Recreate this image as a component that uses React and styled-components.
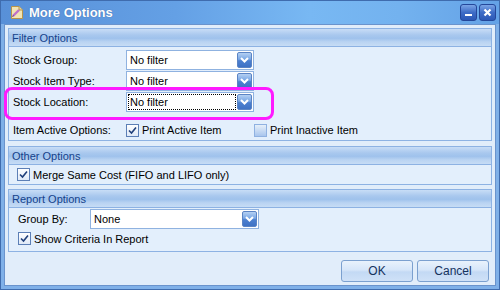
import React from 'react'
import styled, { createGlobalStyle } from 'styled-components'

const Global = createGlobalStyle`
	html, body {
		margin: 0;
		padding: 0;
		background: #fff;
	}
	body {
		font-family: "Liberation Sans", Arial, sans-serif;
		font-size: 11px;
		color: #000;
	}
`

const Window = styled.div`
	box-sizing: border-box;
	position: relative;
	width: 500px;
	height: 290px;
	display: flex;
	flex-direction: column;
	border: 1px solid #3f6cae;
	background: #7fb0e8;
`

const TitleBar = styled.div`
	height: 23px;
	display: flex;
	align-items: center;
	gap: 5px;
	padding: 0 3px 0 9px;
	background: linear-gradient(to right, #5890d8 0%, #64a0e5 35%, #78b8f3 62%, #73b2ef 80%, #64a2e6 100%);
`

const Title = styled.div`
	flex: 1;
	color: #fff;
	font-weight: bold;
	font-size: 13px;
	text-shadow: 0 0 1px rgba(30, 60, 120, 0.6);
`

const Caps = styled.div`
	display: flex;
	gap: 2px;
`

const CapButton = styled.div`
	box-sizing: border-box;
	width: 17px;
	height: 17px;
	border: 1px solid #24479a;
	border-radius: 3px;
	background: linear-gradient(#7aa4e6 0%, #3e6cc6 50%, #2c58b6 100%);
	display: flex;
	align-items: center;
	justify-content: center;
`

const Body = styled.div`
	flex: 1;
	margin: 0 3px 3px;
	border: 1px solid #6a93cc;
	background: #e1edfa;
	padding: 3px;
	display: flex;
	flex-direction: column;
`

const Panel = styled.div`
	border: 1px solid #8db2e3;
	background: #e3effc;
	margin-bottom: ${p => p.$gap || 0}px;
`

const PanelHeader = styled.div`
	height: 17px;
	display: flex;
	align-items: center;
	padding-left: 3px;
	border-bottom: 1px solid #8db2e3;
	color: #15428b;
	background: linear-gradient(#c8ddf6 0%, #a9c8ee 35%, #9fc2ec 55%, #b9d3f2 75%, #c6dcf5 100%);
`

const FilterGrid = styled.div`
	display: grid;
	grid-template-columns: 113px 1fr;
	grid-template-rows: 20px 20px 20px;
	row-gap: 1px;
	align-items: center;
	padding: 3px 0 2px 4px;
`

const Label = styled.div`
	white-space: nowrap;
`

const CheckRow = styled.div`
	grid-column: 1 / -1;
	display: grid;
	grid-template-columns: 113px 128px 1fr;
	align-items: center;
	height: 16px;
	margin-top: 9px;
`

const OtherBody = styled.div`
	padding: 3px 8px 3px;
`

const ReportGrid = styled.div`
	display: grid;
	grid-template-columns: 72px 1fr;
	align-items: center;
	row-gap: 3px;
	padding: 1px 0 6px 9px;
`

const Select = styled.div`
	box-sizing: border-box;
	width: ${p => p.$w}px;
	height: 20px;
	border: 1px solid #8fb2e0;
	background: #fff;
	display: flex;
	align-items: center;
	padding: 1px;
`

const SelectText = styled.span`
	flex: 1;
	align-self: stretch;
	display: flex;
	align-items: center;
	padding-left: 2px;
	margin-right: 1px;
	outline: ${p => (p.$focus ? '1px dotted #000' : 'none')};
	outline-offset: -1px;
`

const SelectButton = styled.span`
	box-sizing: border-box;
	width: 15px;
	height: 16px;
	border: 1px solid #5b84c4;
	border-radius: 2px;
	background: linear-gradient(#b4d0f3 0%, #78a6e4 45%, #4c80d0 55%, #3f72c4 100%);
	display: flex;
	align-items: center;
	justify-content: center;
`

const Check = styled.label`
	display: flex;
	align-items: center;
	gap: 3px;
	white-space: nowrap;
	grid-column: ${p => p.$span ? '1 / -1' : 'auto'};
`

const Box = styled.span`
	box-sizing: border-box;
	width: 13px;
	height: 13px;
	border: 1px solid ${p => (p.$checked ? '#5c7fb6' : '#8fb1e1')};
	background: ${p => (p.$checked
		? 'linear-gradient(#ffffff, #dfe9f7)'
		: 'linear-gradient(#e6eff9, #a8c5ed)')};
	display: flex;
	align-items: center;
	justify-content: center;
`

const Footer = styled.div`
	margin-top: auto;
	display: flex;
	justify-content: flex-end;
	gap: 4px;
	padding-right: 3px;
`

const Button = styled.div`
	box-sizing: border-box;
	width: 72px;
	height: 22px;
	border: 1px solid #7ba0cf;
	border-radius: 3px;
	background: linear-gradient(#e9f2fc 0%, #d6e6f9 45%, #c3d9f4 55%, #cfe1f7 100%);
	color: #15325e;
	font-size: 12px;
	display: flex;
	align-items: center;
	justify-content: center;
`

const Highlight = styled.div`
	position: absolute;
	left: 3px;
	top: 86px;
	width: 270px;
	height: 33px;
	box-sizing: border-box;
	border: 3px solid #ff1aff;
	border-radius: 8px;
	pointer-events: none;
`

const Chevron = () => (
	<svg width="9" height="6" viewBox="0 0 9 6">
		<path d="M1 1 L4.5 4.5 L8 1" fill="none" stroke="#fff" strokeWidth="2" />
	</svg>
)

const Tick = () => (
	<svg width="9" height="9" viewBox="0 0 9 9">
		<path d="M1 4.5 L3.5 7 L8 1.5" fill="none" stroke="#1f3f7a" strokeWidth="1.6" />
	</svg>
)

const Dropdown = ({ w, value, focus }) => (
	<Select $w={w}>
		<SelectText $focus={focus}>{value}</SelectText>
		<SelectButton><Chevron /></SelectButton>
	</Select>
)

const CheckBox = ({ checked, children, span }) => (
	<Check $span={span}>
		<Box $checked={checked}>{checked && <Tick />}</Box>
		{children}
	</Check>
)

const AppIcon = () => (
	<svg width="14" height="15" viewBox="0 0 14 15">
		<path d="M1.5 1.5 H9 L12.5 5 V13.5 H1.5 Z" fill="#f3e4b4" stroke="#b8954a" />
		<path d="M9 1.5 V5 H12.5" fill="#e8d49a" stroke="#b8954a" />
		<path d="M3 11 L9 5" stroke="#c070c8" strokeWidth="2.4" />
		<path d="M2.5 12 L3.5 10.2" stroke="#6a4b8a" strokeWidth="1" />
	</svg>
)

export default function App() {
	return (
		<>
			<Global />
			<Window>
				<TitleBar>
					<AppIcon />
					<Title>More Options</Title>
					<Caps>
						<CapButton>
							<svg width="9" height="9" viewBox="0 0 9 9">
								<rect x="1" y="6" width="7" height="2" fill="#fff" />
							</svg>
						</CapButton>
						<CapButton>
							<svg width="9" height="9" viewBox="0 0 9 9">
								<path d="M1.5 1.5 L7.5 7.5 M7.5 1.5 L1.5 7.5" stroke="#fff" strokeWidth="2.2" />
							</svg>
						</CapButton>
					</Caps>
				</TitleBar>
				<Body>
					<Panel $gap={5}>
						<PanelHeader>Filter Options</PanelHeader>
						<FilterGrid>
							<Label>Stock Group:</Label>
							<Dropdown w={128} value="No filter" />
							<Label>Stock Item Type:</Label>
							<Dropdown w={128} value="No filter" />
							<Label>Stock Location:</Label>
							<Dropdown w={128} value="No filter" focus />
							<CheckRow>
								<Label>Item Active Options:</Label>
								<CheckBox checked>Print Active Item</CheckBox>
								<CheckBox>Print Inactive Item</CheckBox>
							</CheckRow>
						</FilterGrid>
					</Panel>
					<Panel $gap={4}>
						<PanelHeader>Other Options</PanelHeader>
						<OtherBody>
							<CheckBox checked>Merge Same Cost (FIFO and LIFO only)</CheckBox>
						</OtherBody>
					</Panel>
					<Panel>
						<PanelHeader>Report Options</PanelHeader>
						<ReportGrid>
							<Label>Group By:</Label>
							<Dropdown w={169} value="None" />
							<CheckBox checked span>Show Criteria In Report</CheckBox>
						</ReportGrid>
					</Panel>
					<Footer>
						<Button>OK</Button>
						<Button>Cancel</Button>
					</Footer>
				</Body>
				<Highlight />
			</Window>
		</>
	)
}
